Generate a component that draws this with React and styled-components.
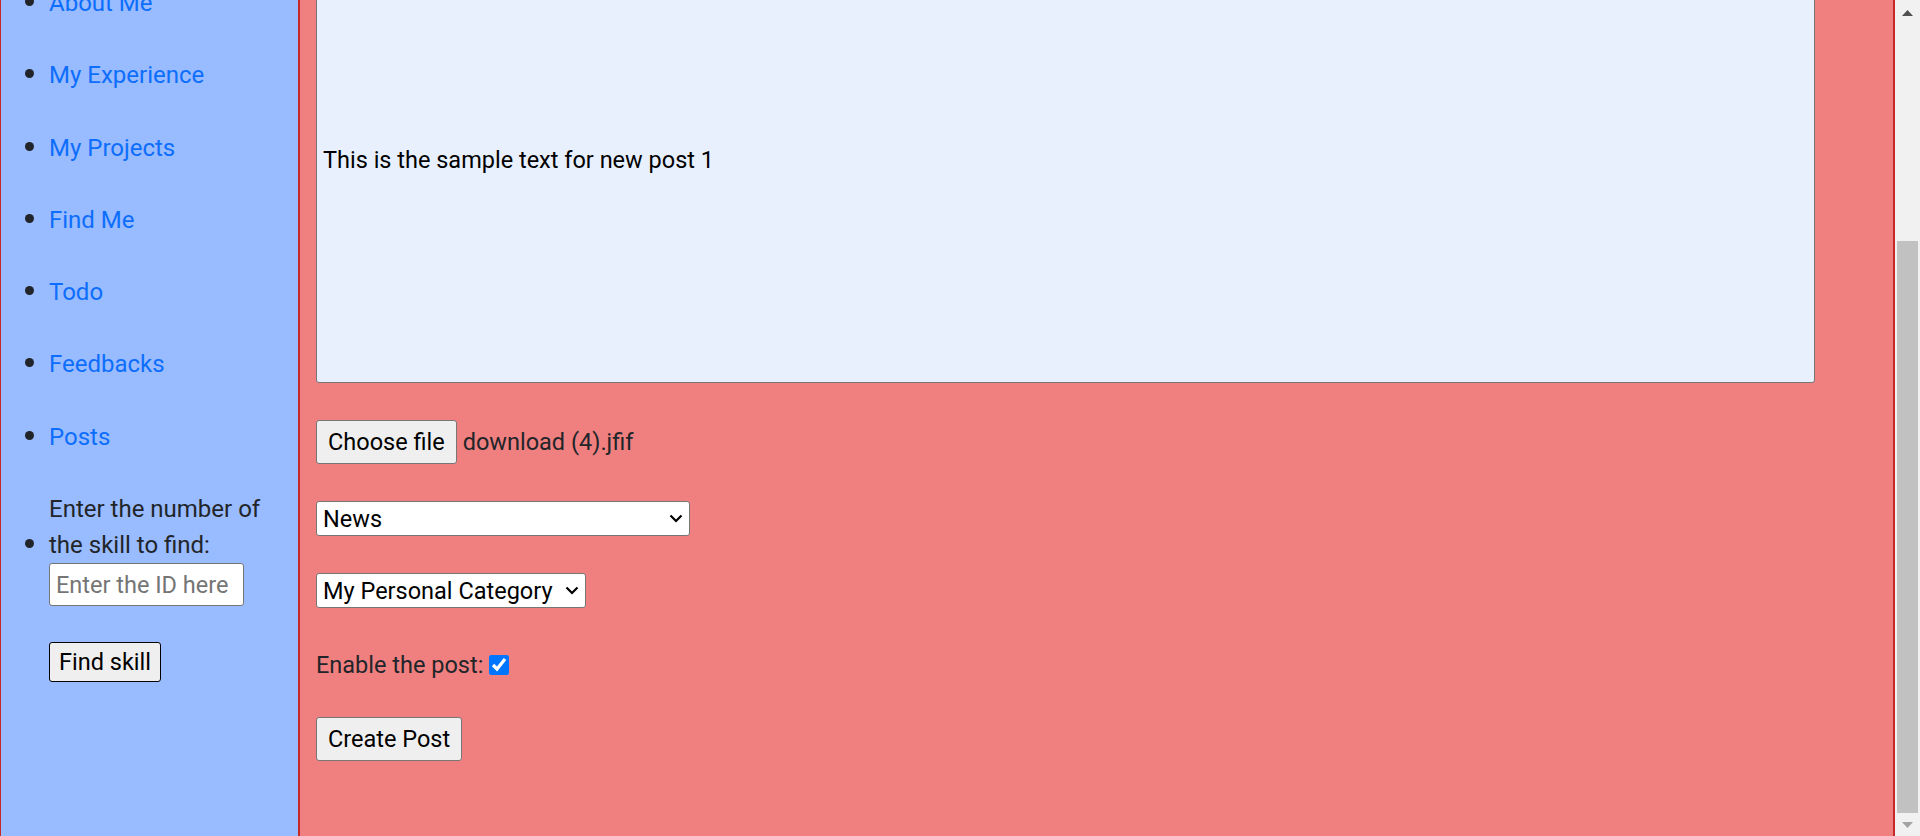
import React from "react";
import styled, { createGlobalStyle } from "styled-components";

const navLinks = ["About Me", "My Experience", "My Projects", "Find Me", "Todo", "Feedbacks", "Posts"];

const chevron =
  "url(\"data:image/svg+xml,%3Csvg xmlns='http://www.w3.org/2000/svg' width='14' height='9' viewBox='0 0 14 9'%3E%3Cpath d='M1.5 1.5 L7 7 L12.5 1.5' fill='none' stroke='%23000' stroke-width='2.2'/%3E%3C/svg%3E\")";

const GlobalStyle = createGlobalStyle`
  html, body {
    margin: 0;
    height: 100%;
    overflow: hidden;
  }

  body {
    font-family: Roboto, "Liberation Sans", sans-serif;
    font-size: 24px;
    line-height: 36px;
    color: #212529;
  }
`;

const App = () => {
  return (
    <>
      <GlobalStyle />
      <Page>
        <Sidebar>
          <NavList>
            {navLinks.map((link) => (
              <NavItem key={link}>
                <NavLink href="#">{link}</NavLink>
              </NavItem>
            ))}
            <NavItem>
              <SkillLabel>Enter the number of the skill to find:</SkillLabel>
              <IdInput type="text" placeholder="Enter the ID here" />
              <FindButton>Find skill</FindButton>
            </NavItem>
          </NavList>
        </Sidebar>

        <Main>
          <PostText readOnly value="This is the sample text for new post 1" />

          <FileRow>
            <FileButton>Choose file</FileButton>
            <FileName>download (4).jfif</FileName>
          </FileRow>

          <Select $width={374} defaultValue="news">
            <option value="news">News</option>
          </Select>

          <Select $width={270} defaultValue="personal">
            <option value="personal">My Personal Category</option>
          </Select>

          <CheckRow>
            Enable the post:
            <Check type="checkbox" defaultChecked />
          </CheckRow>

          <CreateButton>Create Post</CreateButton>
        </Main>

        <Scrollbar>
          <ScrollArrow $color="#505050">
            <svg width="11" height="6" viewBox="0 0 11 6">
              <path d="M0 6 L5.5 0 L11 6 Z" fill="currentColor" />
            </svg>
          </ScrollArrow>
          <Track>
            <Thumb $top={216} $height={572} />
          </Track>
          <ScrollArrow $color="#a3a3a3" $height={23}>
            <svg width="11" height="6" viewBox="0 0 11 6">
              <path d="M0 0 L5.5 6 L11 0 Z" fill="currentColor" />
            </svg>
          </ScrollArrow>
        </Scrollbar>
      </Page>
    </>
  );
};

const Page = styled.div`
  display: flex;
  height: 836px;
  overflow: hidden;
`;

const Sidebar = styled.nav`
  width: 297px;
  flex-shrink: 0;
  background-color: #99bbff;
  border-left: 1px solid #c62828;
  border-right: 2px solid #c62828;
`;

const NavList = styled.ul`
  margin: -15px 0 0;
  padding-left: 48px;
  list-style: none;
`;

const NavItem = styled.li`
  margin-bottom: 36.3px;
  line-height: 36px;

  &::before {
    content: "";
    display: inline-block;
    width: 9px;
    height: 9px;
    margin: 0 15px 0 -24px;
    border-radius: 50%;
    background: #212529;
    vertical-align: 5px;
  }
`;

const NavLink = styled.a`
  color: #0d6efd;
  text-decoration: none;
`;

const SkillLabel = styled.span`
  display: inline-block;
  max-width: 240px;
`;

const IdInput = styled.input`
  display: block;
  box-sizing: border-box;
  width: 195px;
  height: 43px;
  margin: 0;
  padding: 0 6px;
  border: 1px solid #767676;
  border-radius: 3px;
  background: #fff;
  font-family: inherit;
  font-size: 23.5px;
  color: #000;

  &::placeholder {
    color: #757575;
  }
`;

const FindButton = styled.button`
  display: block;
  box-sizing: border-box;
  height: 40px;
  margin-top: 36px;
  padding: 0 9px;
  border: 1px solid #000;
  border-radius: 3px;
  background: #efefef;
  font-family: inherit;
  font-size: 23.5px;
  color: #000;
`;

const Main = styled.main`
  flex: 1;
  display: flex;
  flex-direction: column;
  align-items: flex-start;
  gap: 37px;
  padding-left: 16px;
  background-color: #f08080;
  border-right: 2px solid #c62828;
`;

const PostText = styled.textarea`
  box-sizing: border-box;
  width: 1499px;
  height: 400px;
  margin: -17px 0 0;
  padding: 158px 6px 0;
  border: 1px solid #767676;
  border-radius: 3px;
  background: #e8f0fe;
  font-family: inherit;
  font-size: 23.5px;
  line-height: 36px;
  color: #000;
  resize: none;
  outline: none;
`;

const FileRow = styled.div`
  display: flex;
  align-items: center;
  gap: 6px;
  height: 44px;
  font-size: 23.5px;
`;

const ControlButton = styled.button`
  box-sizing: border-box;
  height: 44px;
  margin: 0;
  padding: 0 11px;
  border: 1px solid #767676;
  border-radius: 3px;
  background: #efefef;
  font-family: inherit;
  font-size: 23.5px;
  color: #000;
`;

const FileButton = styled(ControlButton)``;

const CreateButton = styled(ControlButton)`
  margin-top: -3px;
`;

const FileName = styled.span`
  color: #212529;
`;

const Select = styled.select`
  box-sizing: border-box;
  width: ${(p) => p.$width}px;
  height: 35px;
  margin: 0;
  padding: 0 28px 0 6px;
  border: 1px solid #767676;
  border-radius: 3px;
  background: #fff ${chevron} no-repeat right 6px center;
  appearance: none;
  font-family: inherit;
  font-size: 23.5px;
  color: #000;
`;

const CheckRow = styled.label`
  display: flex;
  align-items: center;
  height: 36px;
  margin-top: 2px;
  font-size: 23.5px;
`;

const Check = styled.input`
  width: 20px;
  height: 20px;
  margin: 0 0 0 6px;
  accent-color: #0075ff;
`;

const Scrollbar = styled.div`
  width: 25px;
  flex-shrink: 0;
  display: flex;
  flex-direction: column;
  background: #f1f1f1;
`;

const ScrollArrow = styled.div`
  height: ${(p) => p.$height || 25}px;
  display: flex;
  align-items: center;
  justify-content: center;
  color: ${(p) => p.$color};
`;

const Track = styled.div`
  flex: 1;
`;

const Thumb = styled.div`
  margin: ${(p) => p.$top}px 2px 0;
  height: ${(p) => p.$height}px;
  background: #c1c1c1;
`;

export default App;
